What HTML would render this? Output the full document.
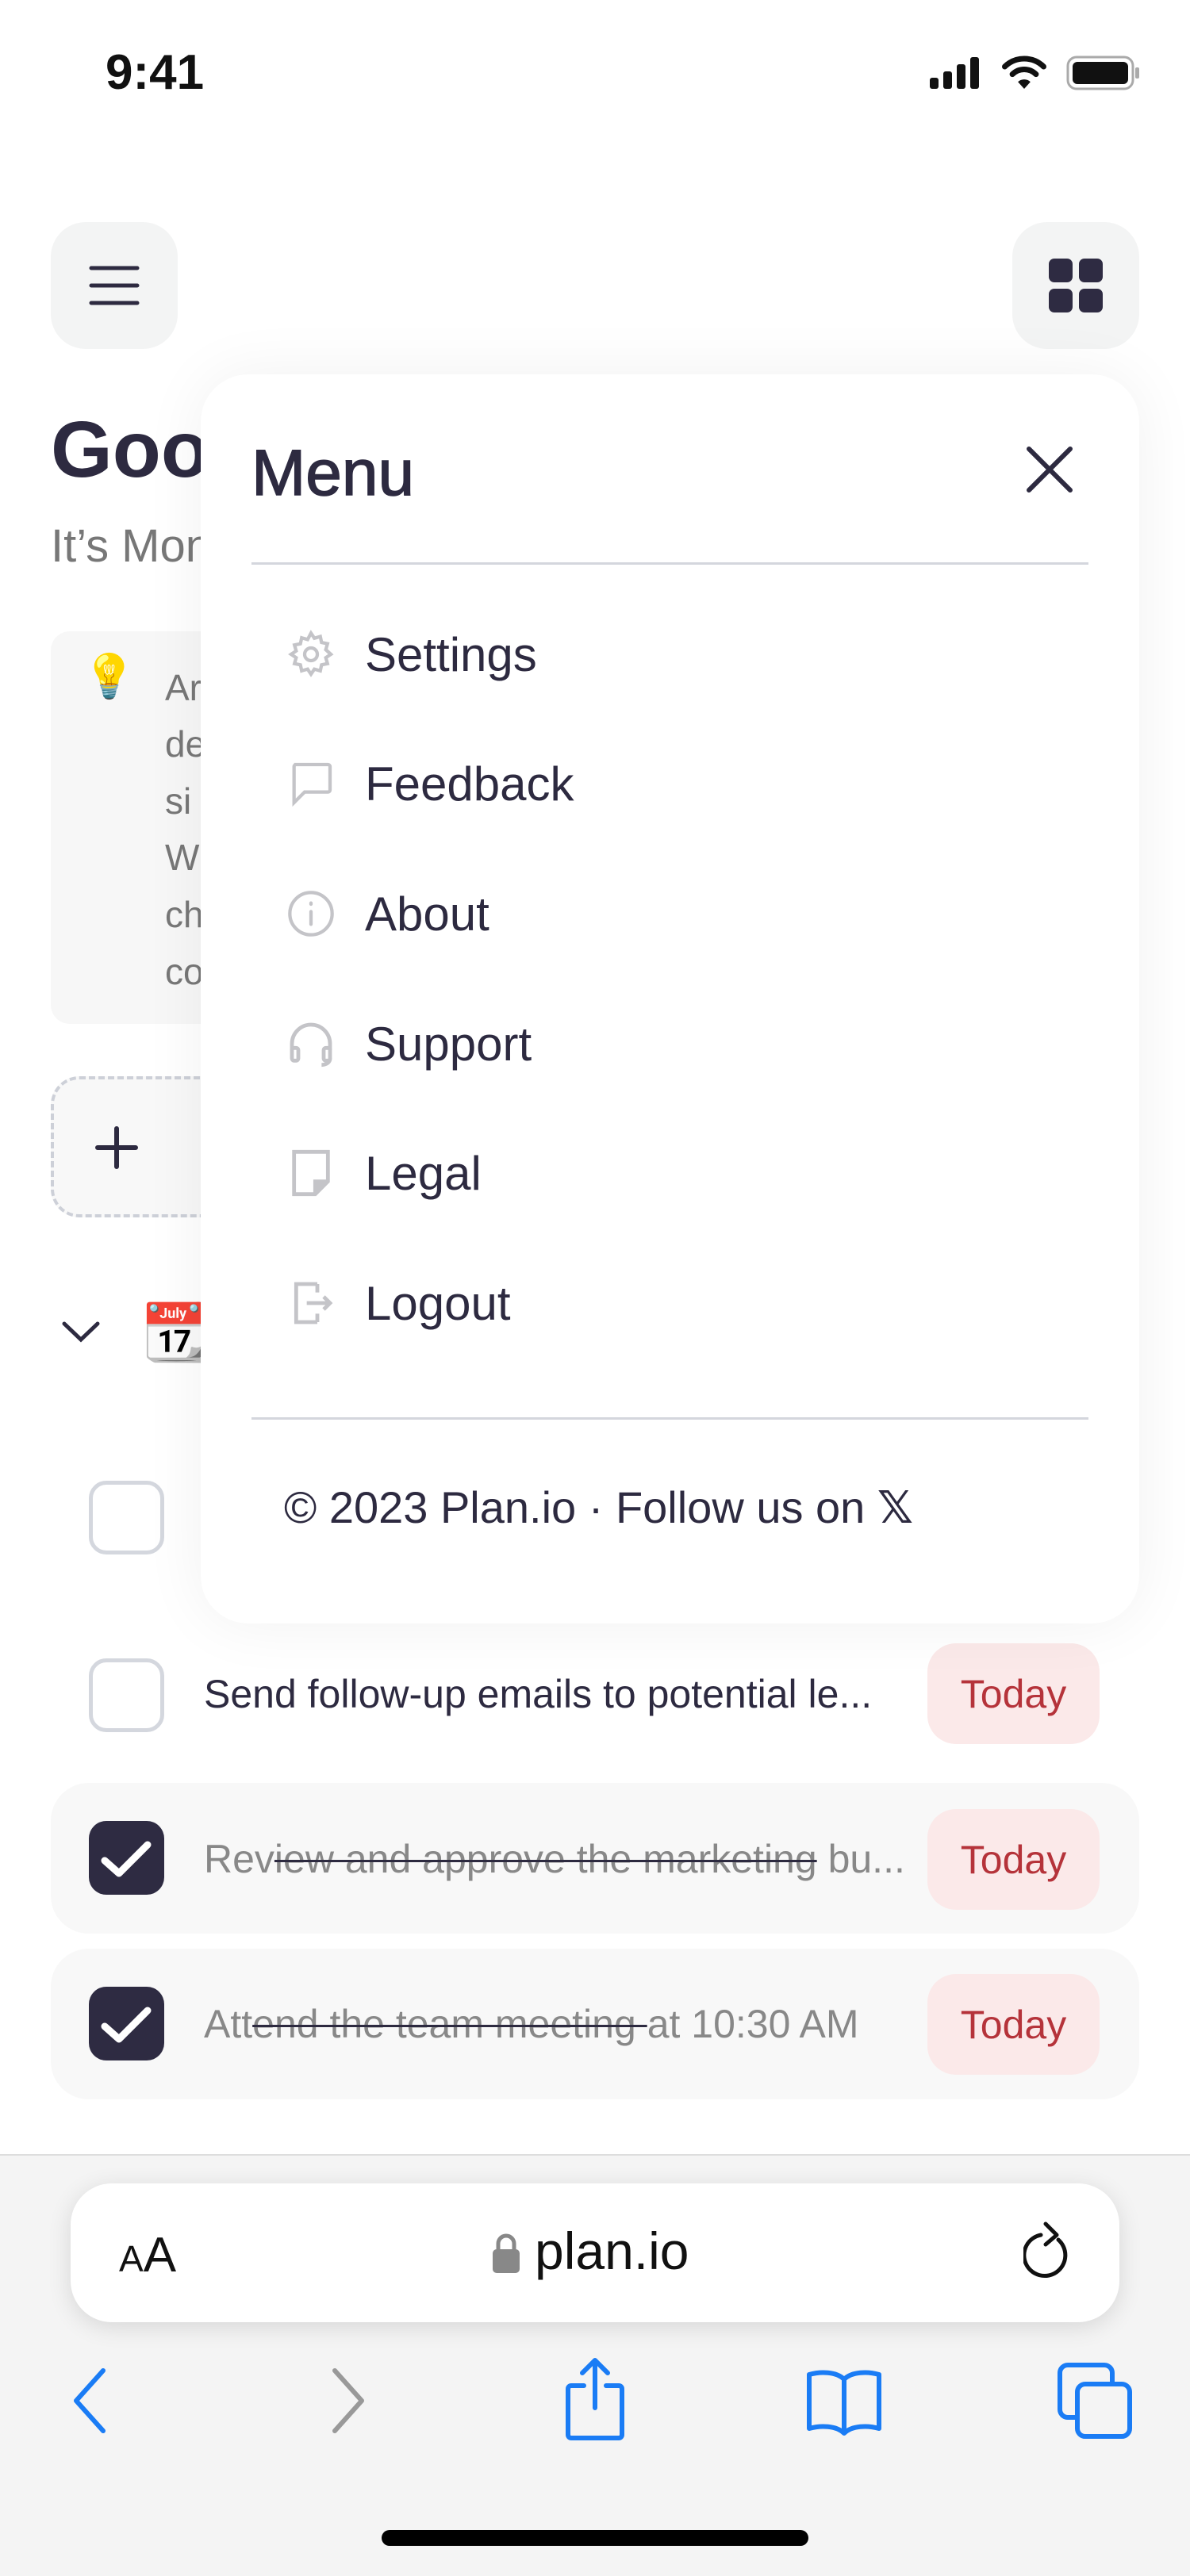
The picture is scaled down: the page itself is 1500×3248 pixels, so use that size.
<!DOCTYPE html>
<html><head><meta charset="utf-8"><style>
*{margin:0;padding:0;box-sizing:border-box}
body{width:1500px;height:3248px;position:relative;background:#fff;font-family:"Liberation Sans",sans-serif;overflow:hidden;color:#2d2a40}
.a{position:absolute}
.btn{background:#f3f4f4;border-radius:44px;width:160px;height:160px}
.row{left:64px;width:1372px;height:190px;background:#f8f8f8;border-radius:48px}
.cb{width:95px;height:93px;border-radius:22px;border:5px solid #d4d7de;background:#fff}
.cbd{background:#2e2b42;border:none}
.today{width:217px;height:127px;background:#fbe9e9;border-radius:36px;color:#b5333a;font-size:50px;display:flex;align-items:center;justify-content:center}
.tt{font-size:50px;white-space:nowrap;left:257px}
.item{left:360px;height:80px;display:flex;align-items:center;font-size:60px;color:#2d2a40}
.item svg{width:64px;height:64px;margin-right:36px}
.tip{left:208px;font-size:46px;color:#777}
</style></head><body>
<div class="a" style="left:133px;top:56px;font-size:62px;font-weight:bold;color:#111">9:41</div>
<svg class="a" style="left:1172px;top:72px" width="64" height="40"><rect x="0" y="26" width="11" height="14" rx="3" fill="#111"/><rect x="17" y="18" width="11" height="22" rx="3" fill="#111"/><rect x="34" y="9" width="11" height="31" rx="3" fill="#111"/><rect x="51" y="0" width="11" height="40" rx="3" fill="#111"/></svg>
<svg class="a" style="left:1263px;top:70px" width="56" height="42" viewBox="0 0 62 48"><path d="M3 16 A40 40 0 0 1 59 16" stroke="#111" stroke-width="8" fill="none" stroke-linecap="round"/><path d="M14 27 A24 24 0 0 1 48 27" stroke="#111" stroke-width="8" fill="none" stroke-linecap="round"/><path d="M31 48 L22 38 A13 13 0 0 1 40 38 Z" fill="#111"/></svg>
<svg class="a" style="left:1344px;top:70px" width="94" height="44"><rect x="2" y="2" width="82" height="40" rx="11" fill="none" stroke="#aaa" stroke-width="3"/><rect x="8" y="8" width="70" height="28" rx="6" fill="#111"/><rect x="87" y="15" width="5" height="14" rx="2" fill="#aaa"/></svg>

<div class="a btn" style="left:64px;top:280px"><svg class="a" style="left:48px;top:52px" width="64" height="56"><path d="M3 6H61M3 28H61M3 50H61" stroke="#2d2a40" stroke-width="5" stroke-linecap="round"/></svg></div>
<div class="a btn" style="left:1276px;top:280px"><svg class="a" style="left:46px;top:46px" width="68" height="68"><rect x="0" y="0" width="30" height="30" rx="7" fill="#2e2b42"/><rect x="38" y="0" width="30" height="30" rx="7" fill="#2e2b42"/><rect x="0" y="38" width="30" height="30" rx="7" fill="#2e2b42"/><rect x="38" y="38" width="30" height="30" rx="7" fill="#2e2b42"/></svg></div>

<div class="a" style="left:64px;top:510px;font-size:100px;font-weight:bold;color:#2d2a40">Good Morning</div>
<div class="a" style="left:64px;top:655px;font-size:58px;color:#777">It’s Monday</div>
<div class="a" style="left:64px;top:796px;width:1372px;height:495px;background:#f7f7f7;border-radius:24px"></div>
<div class="a" style="left:104px;top:822px;font-size:54px">💡</div>
<div class="tip a" style="top:840px">Ar</div><div class="tip a" style="top:911px">de</div><div class="tip a" style="top:983px">si</div><div class="tip a" style="top:1054px">W</div><div class="tip a" style="top:1126px">ch</div><div class="tip a" style="top:1198px">co</div>
<div class="a" style="left:64px;top:1357px;width:1372px;height:178px;background:#f8f8f8;border:4px dashed #cdd0d8;border-radius:36px"></div>
<svg class="a" style="left:120px;top:1420px" width="54" height="54"><path d="M27 3V51M3 27H51" stroke="#2d2a40" stroke-width="6" stroke-linecap="round"/></svg>
<svg class="a" style="left:78px;top:1665px" width="48" height="30"><path d="M3 4L24 24L45 4" stroke="#2d2a40" stroke-width="5" fill="none" stroke-linecap="round"/></svg>
<div class="a" style="left:178px;top:1640px;font-size:70px">📆</div>
<div class="a cb" style="left:112px;top:1867px"></div>

<div class="a cb" style="left:112px;top:2091px"></div>
<div class="a tt" style="top:2107px;color:#2d2a40">Send follow-up emails to potential le...</div>
<div class="a today" style="left:1169px;top:2072px">Today</div>

<div class="a row" style="top:2248px"></div>
<div class="a cb cbd" style="left:112px;top:2296px"><svg width="95" height="97"><path d="M20 50L38 66L74 30" stroke="#fff" stroke-width="9" fill="none" stroke-linecap="round" stroke-linejoin="round"/></svg></div>
<div class="a tt" style="top:2315px;color:#888">Rev<span style="text-decoration:line-through;text-decoration-color:#2d2a40;text-decoration-thickness:3px">iew and approve the marketing</span> bu...</div>
<div class="a today" style="left:1169px;top:2281px">Today</div>

<div class="a row" style="top:2457px"></div>
<div class="a cb cbd" style="left:112px;top:2505px"><svg width="95" height="97"><path d="M20 50L38 66L74 30" stroke="#fff" stroke-width="9" fill="none" stroke-linecap="round" stroke-linejoin="round"/></svg></div>
<div class="a tt" style="top:2523px;color:#888">Att<span style="text-decoration:line-through;text-decoration-color:#2d2a40;text-decoration-thickness:3px">end the team meeting </span>at 10:30 AM</div>
<div class="a today" style="left:1169px;top:2489px">Today</div>

<div class="a" style="left:253px;top:472px;width:1183px;height:1575px;background:#fff;border-radius:60px;box-shadow:0 0 80px rgba(0,0,0,0.06)">
  <div class="a" style="left:64px;top:78px;font-size:82px;color:#2d2a40;-webkit-text-stroke:1.5px #2d2a40">Menu</div>
  <svg class="a" style="left:1040px;top:90px" width="60" height="60"><path d="M4 4L56 56M56 4L4 56" stroke="#2d2a40" stroke-width="6" stroke-linecap="round"/></svg>
  <div class="a" style="left:64px;top:237px;width:1055px;height:3px;background:#d4d6dd"></div>
  <div class="a" style="left:64px;top:1315px;width:1055px;height:3px;background:#d4d6dd"></div>
</div>
<div class="a item" style="top:785px"><svg viewBox="0 0 24 24" fill="none" stroke="#c4c4c8" stroke-width="1.6"><circle cx="12" cy="12" r="3"/><path d="M12 2l1.6 2.4 2.8-.8.6 2.8 2.8.6-.8 2.8L21.4 12l-2.4 1.6.8 2.8-2.8.6-.6 2.8-2.8-.8L12 21.4l-1.6-2.4-2.8.8-.6-2.8-2.8-.6.8-2.8L2.6 12 5 10.4l-.8-2.8 2.8-.6.6-2.8 2.8.8z"/></svg>Settings</div>
<div class="a item" style="top:948px"><svg viewBox="0 0 24 24" fill="none" stroke="#c4c4c8" stroke-width="1.6"><path d="M4 3h16a1 1 0 011 1v11a1 1 0 01-1 1H9l-5 5V4a1 1 0 011-1z"/></svg>Feedback</div>
<div class="a item" style="top:1112px"><svg viewBox="0 0 24 24" fill="none" stroke="#c4c4c8" stroke-width="1.6"><circle cx="12" cy="12" r="10"/><path d="M12 11v6M12 7v.5" stroke-linecap="round"/></svg>About</div>
<div class="a item" style="top:1276px"><svg viewBox="0 0 24 24" fill="none" stroke="#c4c4c8" stroke-width="1.8"><path d="M3 15v-3a9 9 0 0118 0v3"/><rect x="3" y="14" width="3" height="6" rx="1"/><rect x="18" y="14" width="3" height="6" rx="1"/><path d="M21 19c0 2-2 3-4 3"/></svg>Support</div>
<div class="a item" style="top:1439px"><svg viewBox="0 0 24 24" fill="none" stroke="#c4c4c8" stroke-width="1.8"><path d="M4 2h16v14l-6 6H4z"/><path d="M20 16h-6v6" fill="#c4c4c8"/></svg>Legal</div>
<div class="a item" style="top:1603px"><svg viewBox="0 0 24 24" fill="none" stroke="#c4c4c8" stroke-width="1.8"><path d="M15 3H5v18h10M15 7V3M15 21v-4M10 12h11M18 9l3 3-3 3"/></svg>Logout</div>
<div class="a" style="left:358px;top:1868px;font-size:56px;color:#2d2a40;white-space:nowrap">© 2023 Plan.io · Follow us on <span style="font-family:'DejaVu Sans',sans-serif;font-weight:bold">𝕏</span></div>

<div class="a" style="left:0;top:2716px;width:1500px;height:532px;background:#f4f4f4;border-top:2px solid #ddd"></div>
<div class="a" style="left:89px;top:2753px;width:1322px;height:175px;background:#fff;border-radius:52px;box-shadow:0 6px 30px rgba(0,0,0,0.12)"></div>
<div class="a" style="left:150px;top:2808px;font-size:62px;color:#111"><span style="font-size:46px">A</span>A</div>
<svg class="a" style="left:620px;top:2815px" width="36" height="52"><path d="M8 22v-8a10 10 0 0120 0v8" stroke="#888" stroke-width="5" fill="none"/><rect x="1" y="21" width="34" height="30" rx="5" fill="#888"/></svg>
<div class="a" style="left:674px;top:2800px;font-size:66px;color:#111">plan.io</div>
<svg class="a" style="left:1290px;top:2800px" width="64" height="74"><path d="M44 24A26 26 0 1 1 22 18" stroke="#111" stroke-width="5" fill="none" stroke-linecap="round"/><path d="M22 4L36 18L22 30" stroke="#111" stroke-width="5" fill="none" stroke-linecap="round" stroke-linejoin="round" transform="translate(6,0)"/></svg>
<svg class="a" style="left:88px;top:2985px" width="50" height="84"><path d="M42 4L8 42L42 80" stroke="#1a7cf5" stroke-width="6" fill="none" stroke-linecap="round" stroke-linejoin="round"/></svg>
<svg class="a" style="left:414px;top:2985px" width="50" height="84"><path d="M8 4L42 42L8 80" stroke="#999" stroke-width="6" fill="none" stroke-linecap="round" stroke-linejoin="round"/></svg>
<svg class="a" style="left:708px;top:2972px" width="84" height="108"><path d="M28 36H12a4 4 0 00-4 4v58a4 4 0 004 4h60a4 4 0 004-4V40a4 4 0 00-4-4H56M42 64V6M26 20L42 4L58 20" stroke="#1a7cf5" stroke-width="6" fill="none" stroke-linecap="round" stroke-linejoin="round"/></svg>
<svg class="a" style="left:1014px;top:2986px" width="100" height="86"><path d="M50 14C40 4 20 4 6 8v68c14-4 34-4 44 6c10-10 30-10 44-6V8C80 4 60 4 50 14zM50 14v68" stroke="#1a7cf5" stroke-width="6" fill="none" stroke-linejoin="round"/></svg>
<svg class="a" style="left:1332px;top:2978px" width="98" height="100"><rect x="4" y="4" width="66" height="66" rx="10" stroke="#1a7cf5" stroke-width="6" fill="none"/><rect x="26" y="28" width="66" height="66" rx="10" stroke="#1a7cf5" stroke-width="6" fill="#f4f4f4"/></svg>
<div class="a" style="left:481px;top:3190px;width:538px;height:20px;border-radius:10px;background:#000"></div>
</body></html>
